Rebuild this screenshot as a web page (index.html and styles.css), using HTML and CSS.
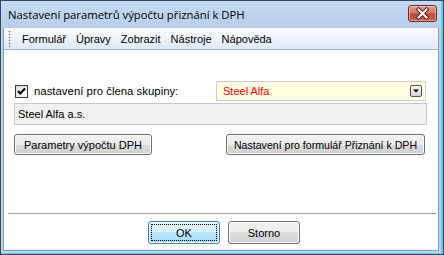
FILE: index.html
```html
<!DOCTYPE html>
<html lang="cs">
<head>
<meta charset="utf-8">
<link rel="stylesheet" href="styles.css">
</head>
<body>
<div class="window">
  <div class="titlebar">
    <span class="title">Nastavení parametrů výpočtu přiznání k DPH</span>
    <div class="close">
      <svg width="29" height="17" viewBox="0 0 29 17">
        <path d="M10.5 4.5 L18.5 12.5 M18.5 4.5 L10.5 12.5" stroke="#5a2020" stroke-width="4" stroke-linecap="square"/>
        <path d="M10.5 4.5 L18.5 12.5 M18.5 4.5 L10.5 12.5" stroke="#ffffff" stroke-width="2" stroke-linecap="square"/>
      </svg>
    </div>
  </div>
  <div class="client">
    <div class="menubar">
      <div class="grip"></div>
      <span class="menu-item">Formulář</span>
      <span class="menu-item">Úpravy</span>
      <span class="menu-item">Zobrazit</span>
      <span class="menu-item">Nástroje</span>
      <span class="menu-item">Nápověda</span>
    </div>
    <div class="content">
      <div class="row-group">
        <span class="checkbox">
          <svg width="11" height="11" viewBox="0 0 11 11"><path d="M2 5 L4.3 7.5 L9 2.5" fill="none" stroke="#000" stroke-width="2"/></svg>
        </span>
        <span class="check-label">nastavení pro člena skupiny:</span>
        <div class="combo">
          <span class="combo-text">Steel Alfa</span>
          <span class="combo-btn">
            <svg width="10" height="10" viewBox="0 0 10 10"><path d="M2 3.5 H8 L5 6.5 Z" fill="#000"/></svg>
          </span>
        </div>
      </div>
      <div class="field">Steel Alfa a.s.</div>
      <div class="row-buttons">
        <button class="btn btn-params">Parametry výpočtu DPH</button>
        <button class="btn btn-form">Nastavení pro formulář Přiznání k DPH</button>
      </div>
      <div class="spacer"></div>
      <div class="separator"></div>
      <div class="footer">
        <button class="btn btn-ok">OK</button>
        <button class="btn btn-cancel">Storno</button>
      </div>
    </div>
  </div>
</div>
</body>
</html>
```
FILE: styles.css
```css
* { box-sizing: border-box; }
html, body { margin: 0; padding: 0; background: #fff; }
body {
  font-family: "Liberation Sans", Arial, sans-serif;
  font-size: 11px;
  color: #000;
}
.window {
  width: 444px;
  height: 255px;
  border: 1px solid #2c4866;
  background: linear-gradient(#c6daf2 0px, #b6cee9 27px, #bcd3ec 28px, #bcd3ec 100%);
  display: flex;
  flex-direction: column;
  padding: 0 4px 3px 2px;
  box-shadow: inset -2px 0 0 #5fcfee, inset 0 -1px 0 #5fcfee;
}
.titlebar {
  height: 27px;
  flex: none;
  display: flex;
  align-items: flex-start;
  padding-left: 5px;
}
.title {
  font-family: "Open Sans", "Noto Sans", sans-serif;
  font-size: 11.3px;
  line-height: 16px;
  margin-top: 6px;
  flex: 1;
  color: #000;
}
.close {
  width: 29px;
  height: 17px;
  margin-top: 4px;
  margin-right: 2px;
  border: 1px solid #6a2a2a;
  border-radius: 3px;
  background: linear-gradient(#e6a090 0%, #d07566 45%, #bb4a3a 55%, #c9624c 100%);
  box-shadow: inset 0 0 0 1px rgba(255,220,210,0.5);
  display: flex;
  align-items: center;
  justify-content: center;
  overflow: hidden;
}
.close svg { display: block; margin: -1px; }
.client {
  flex: 1;
  display: flex;
  flex-direction: column;
  border: 1px solid #8d9caf;
  border-top: none;
  background: #fff;
}
.menubar {
  height: 22px;
  flex: none;
  display: flex;
  align-items: center;
  background: linear-gradient(#fcfdff 0%, #eef3fa 50%, #dfe8f5 100%);
  border-bottom: 1px solid #a8b5c6;
}
.grip {
  width: 3px;
  height: 17px;
  margin-left: 4px;
  margin-right: 7px;
  background-image: radial-gradient(circle, #8fa2b8 0.8px, transparent 1.2px);
  background-size: 3px 3px;
}
.menu-item {
  padding: 0 4px;
  margin-right: 2px;
  line-height: 14px;
}
.content {
  flex: 1;
  display: flex;
  flex-direction: column;
  padding: 0 11px 6px 10px;
}
.row-group {
  margin-top: 31px;
  height: 20px;
  display: flex;
  align-items: center;
}
.checkbox {
  width: 13px;
  height: 13px;
  margin-left: 1px;
  border: 1px solid #3a3a3a;
  background: linear-gradient(135deg, #dcdcdc, #ffffff);
  display: flex;
  align-items: center;
  justify-content: center;
}
.checkbox svg { display: block; }
.check-label {
  margin-left: 6px;
  font-size: 11.4px;
}
.combo {
  margin-left: auto;
  margin-right: 1px;
  width: 210px;
  height: 20px;
  border: 1px solid #cfcfcf;
  background: #ffffe1;
  display: flex;
  align-items: center;
}
.combo-text {
  flex: 1;
  color: #ff0000;
  padding-left: 6px;
}
.combo-btn {
  width: 12px;
  height: 12px;
  margin-right: 3px;
  border: 1px solid #555;
  border-radius: 2px;
  background: linear-gradient(#f4f4f4, #d6d6d6);
  display: flex;
  align-items: center;
  justify-content: center;
}
.combo-btn svg { display: block; }
.field {
  margin-top: 2px;
  height: 22px;
  border: 1px solid #c9c9c9;
  background: #f0f0f0;
  padding-left: 3px;
  display: flex;
  align-items: center;
}
.row-buttons {
  margin-top: 9px;
  display: flex;
  justify-content: space-between;
}
.btn {
  font-family: "Liberation Sans", Arial, sans-serif;
  font-size: 11px;
  color: #000;
  height: 21px;
  padding: 0;
  border: 1px solid #707070;
  border-radius: 3px;
  background: linear-gradient(#f2f2f2 0%, #ebebeb 50%, #dddddd 50%, #cfcfcf 100%);
  box-shadow: inset 0 0 0 1px #fbfbfb;
}
.btn-params { width: 138px; }
.btn-form { width: 199px; margin-right: 2px; font-size: 10.6px; }
.spacer { flex: 1; }
.separator {
  height: 1px;
  background: #a0a0a0;
  margin: 0 -9px 7px -6px;
}
.footer {
  display: flex;
  justify-content: center;
  gap: 8px;
  padding-left: 7px;
}
.footer .btn {
  width: 72px;
  height: 23px;
}
.btn-ok {
  border-color: #3c7fb1;
  background: linear-gradient(#eaf6fd 0%, #d9f0fc 50%, #bee6fd 50%, #a7d9f5 100%);
  outline: 1px dotted #000;
  outline-offset: -4px;
}
```
